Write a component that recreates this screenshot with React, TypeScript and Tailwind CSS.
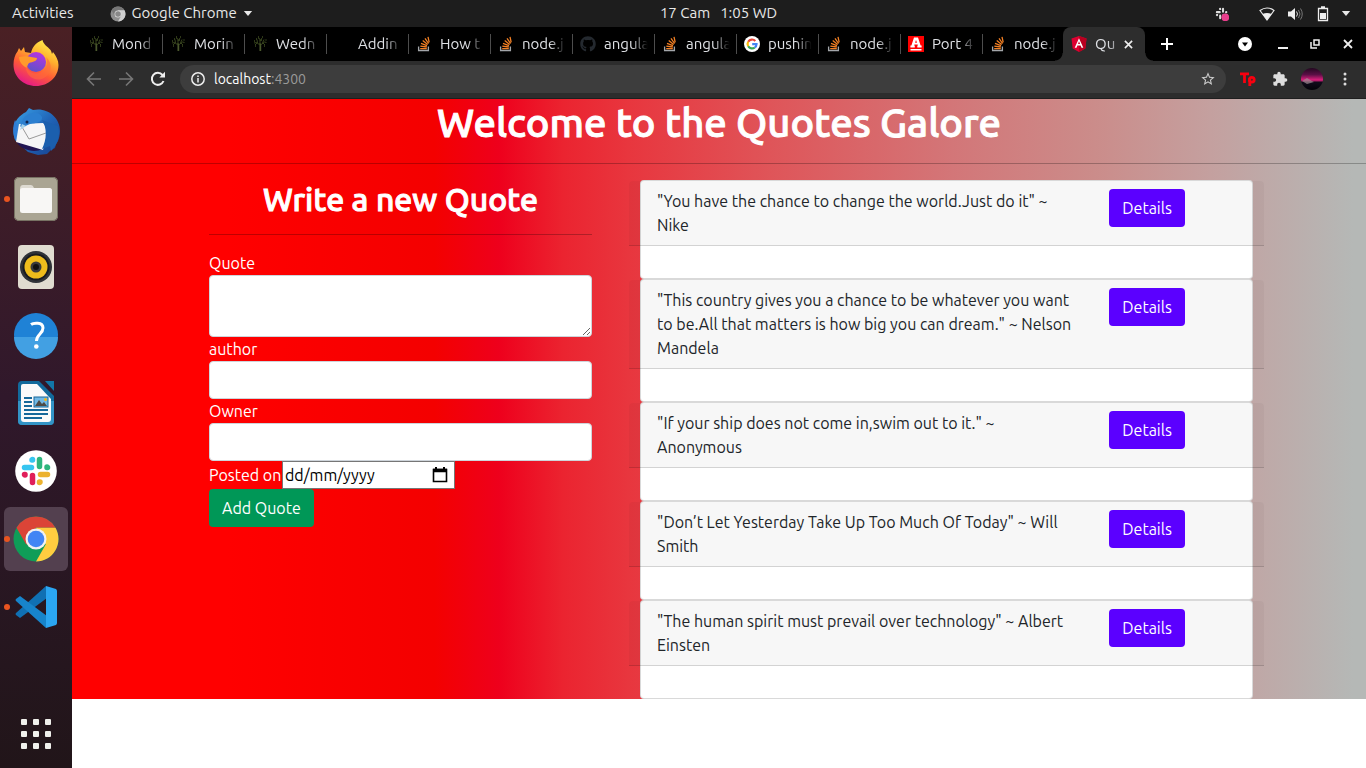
import type { ReactNode } from 'react';
import { FaGithub } from 'react-icons/fa';
import { MdExtension, MdStarBorder } from 'react-icons/md';

type IconName = 'tree' | 'none' | 'stack' | 'github' | 'google' | 'redA';

const tabs: { icon: IconName; title: string }[] = [
  { icon: 'tree', title: 'Mond' },
  { icon: 'tree', title: 'Morin' },
  { icon: 'tree', title: 'Wedn' },
  { icon: 'none', title: 'Addin' },
  { icon: 'stack', title: 'How t' },
  { icon: 'stack', title: 'node.j' },
  { icon: 'github', title: 'angula' },
  { icon: 'stack', title: 'angula' },
  { icon: 'google', title: 'pushin' },
  { icon: 'stack', title: 'node.j' },
  { icon: 'redA', title: 'Port 4' },
  { icon: 'stack', title: 'node.j' },
];

const quotes = [
  '"You have the chance to change the world.Just do it" ~ Nike',
  '"This country gives you a chance to be whatever you want to be.All that matters is how big you can dream." ~ Nelson Mandela',
  '"If your ship does not come in,swim out to it." ~ Anonymous',
  '"Don’t Let Yesterday Take Up Too Much Of Today" ~ Will Smith',
  '"The human spirit must prevail over technology" ~ Albert Einsten',
];

function TabIcon({ name }: { name: IconName }) {
  if (name === 'stack')
    return (
      <svg viewBox="0 0 16 16" className="size-4 shrink-0" fill="none" strokeWidth="1.3">
        <path d="M2.6 10.5v4h9.8v-4" stroke="#a3a6aa" />
        <path d="M4.2 12.6h6.6M4.3 10.1l6.5.9M5 7.3l6 2.3M6.7 4.600l5 4M9 2.3l3.6 5.2M12 .8l1.2 5.6" stroke="#f48024" />
      </svg>
    );
  if (name === 'github') return <FaGithub className="size-4 shrink-0 text-[#24292f]" />;
  if (name === 'tree')
    return (
      <svg viewBox="0 0 16 16" className="size-4 shrink-0" fill="none" stroke="#3c4a20" strokeWidth="0.9">
        <path d="M8 15V7M8.7 15V8" stroke="#5a6a35" />
        <path d="M8 9L4.5 6.500 2 7M5 7l-2 2M5.500 7L5 3.500M8 8V3l-2-1M8 5l2-3M8.500 9l4-3 2 .5M11 7l2 2M10.500 7L12 3.500" />
        <path d="M2 5h1M6 1h1M10 1h1M13.500 4h1M3 10h1M12 10h1M4 3h1M9 4h1" strokeWidth="1.4" />
      </svg>
    );
  if (name === 'google')
    return (
      <svg viewBox="0 0 16 16" className="size-4 shrink-0" fill="none" strokeWidth="2.2">
        <circle cx="8" cy="8" r="8" fill="#fff" />
        <path d="M11.300 4.900A4.500 4.500 0 0 0 4.200 5.700" stroke="#ea4335" />
        <path d="M4.200 5.700a4.500 4.500 0 0 0 0 4.600" stroke="#fbbc05" />
        <path d="M4.200 10.300a4.500 4.500 0 0 0 6.600 1.200" stroke="#34a853" />
        <path d="M10.800 11.500A4.500 4.500 0 0 0 12.500 8.200H8.200" stroke="#4285f4" />
      </svg>
    );
  if (name === 'redA')
    return (
      <svg viewBox="0 0 16 16" className="size-4 shrink-0">
        <path d="M0 0h16v16H0z" fill="#f00" />
        <path d="M6 1.500h4l2.600 8h1v2H9.300v-2H10l-.3-1H6.400l-.3 1h.7v2H2.400v-2h1zM8 4l-.9 2.800H9z" fill="#fff" fillRule="evenodd" />
        <path d="M2.500 13h11v1.500h-11z" fill="#fff" />
      </svg>
    );
  return <span className="size-4 shrink-0" />;
}

function ChromeMark({ className, mono = false }: { className: string; mono?: boolean }) {
  return (
    <svg viewBox="0 0 48 48" className={className}>
      <circle cx="24" cy="24" r="22.500" fill={mono ? '#8e8e8e' : '#0f9d58'} />
      <path d="M4.500 12.800A22.500 22.500 0 0 1 43.500 12.800H24L14.300 29.700z" fill={mono ? '#777' : '#db4437'} />
      <path d="M43.500 12.800A22.500 22.500 0 0 1 24 46.500L33.700 29.600 24 12.800z" fill={mono ? '#d0d0d0' : '#ffcd40'} />
      <circle cx="24" cy="24" r="10.500" fill={mono ? '#ddd' : '#f1f1f1'} />
      <circle cx="24" cy="24" r="8.300" fill={mono ? '#888' : '#4285f4'} />
    </svg>
  );
}

function Firefox() {
  return (
    <svg viewBox="0 0 48 48" className="size-12">
      <defs>
        <linearGradient id="ffBody" x1="0.8" y1="0" x2="0.300" y2="1">
          <stop offset="0" stopColor="#fff44f" />
          <stop offset="0.350" stopColor="#ffb02e" />
          <stop offset="0.650" stopColor="#ff5b36" />
          <stop offset="1" stopColor="#e3168c" />
        </linearGradient>
        <linearGradient id="ffGlobe" x1="0.7" y1="0" x2="0.3" y2="1">
          <stop offset="0" stopColor="#b833e1" />
          <stop offset="1" stopColor="#5b53c8" />
        </linearGradient>
      </defs>
      <path d="M30.500 1c1 5 5 6 8 10 1 1 1 3 1.500 4l1-2c3 4 5.500 8 5.500 13 0 12-10 21-22.500 21S1.500 38 1.500 25.500c0-5 1.500-10 4-13L7 9l2 3 3-4 1 5 6 1c1-5 4-10 11.500-13z" fill="url(#ffBody)" />
      <circle cx="24" cy="23" r="10" fill="url(#ffGlobe)" />
      <path d="M7 18c5-1 9-1 12 0l6 1c0 3-4 4-8 5-1 1-2 3-2 5-4-2-8-6-8-11z" fill="#ff9a2b" />
      <path d="M14 25c1 10 12 12 18 6 3-3 4-8 2-13 7 6 6 17-2 21-9 5-20-3-18-14z" fill="#ff6a3a" opacity="0.6" />
    </svg>
  );
}

function Thunderbird() {
  return (
    <svg viewBox="0 0 48 48" className="size-12">
      <defs>
        <linearGradient id="tbBody" x1="0" y1="0" x2="1" y2="1">
          <stop offset="0" stopColor="#3aa2e8" />
          <stop offset="0.500" stopColor="#2065b8" />
          <stop offset="1" stopColor="#173f8c" />
        </linearGradient>
      </defs>
      <path d="M3 33C-2 18 6 9 14 5l3-4 4 2c14-3 27 7 27 21 0 4-1 7-2 10l-2 3-1 4-4 2-4 4-9 1-10-3z" fill="url(#tbBody)" />
      <path d="M3 13c-3 8-2 16 1 21l3-13z" fill="#2f7ed6" />
      <path d="M4 34h12l14 8c-6 4-21 2-26-8z" fill="#211553" />
      <path d="M7 17l24-1c5 4 4 11 3 16l-3 11L4 35z" fill="#f5f5f6" />
      <path d="M10 20l7 12 17-6" fill="none" stroke="#999" strokeWidth="1" />
      <path d="M11 12c6-8 16-8 19-2 1 5-6 6-12 7-4 1-7 5-9 3-2-1 1-4 2-8z" fill="#2b7fd0" />
      <path d="M30 13c6 9 4 21 0 29l8-3 1 5c6-6 10-14 7-25z" fill="#1b5fae" />
      <circle cx="15" cy="15" r="1.500" fill="#12254d" />
      <path d="M10 17l-2 6 6-4z" fill="#a7d3ea" />
    </svg>
  );
}

function Files() {
  return (
    <svg viewBox="0 0 48 48" className="size-12">
      <rect x="2" y="2" width="44" height="44" rx="5" fill="#aaa593" />
      <rect x="2.500" y="2.500" width="43" height="43" rx="4.500" fill="none" stroke="#777263" />
      <path d="M8 14q0-4 3-4h8q2 0 3 3h14q4 0 4 3v18H8z" fill="#dedbd2" />
      <rect x="8" y="13" width="32" height="25" rx="2.500" fill="#f8f7f5" />
    </svg>
  );
}

function Speaker() {
  return (
    <svg viewBox="0 0 48 48" className="size-12">
      <rect x="6" y="2" width="36" height="44" rx="4" fill="#e0dcd0" />
      <circle cx="24" cy="24" r="16" fill="#303338" />
      <circle cx="24" cy="24" r="13.500" fill="#191b20" />
      <circle cx="24" cy="24" r="11.500" fill="#eebc1c" />
      <circle cx="24" cy="24" r="5.500" fill="#393a3c" />
      <circle cx="24" cy="24" r="3" fill="#111" />
    </svg>
  );
}

function Help() {
  return (
    <svg viewBox="0 0 48 48" className="size-12">
      <circle cx="24" cy="24" r="22" fill="#1f82d6" />
      <path d="M2 26a22 22 0 0 0 44 0z" fill="#42a0e3" />
      <path d="M19 13.500c2-1.500 12-3 12 3.500 0 6-6.500 6-6.500 13" fill="none" stroke="#fff" strokeWidth="3" />
      <circle cx="24.300" cy="35.500" r="2.300" fill="#fff" />
    </svg>
  );
}

function Writer() {
  return (
    <svg viewBox="0 0 48 48" className="size-12">
      <path d="M10 2h17l15 15v25q0 4-4 4H10q-4 0-4-4V6q0-4 4-4z" fill="#126a9c" />
      <path d="M6 22h36v20q0 4-4 4H10q-4 0-4-4z" fill="#3394c6" />
      <path d="M11 5h14l14 15v20q0 3-3 3H12q-3 0-3-3V7q0-2 2-2z" fill="#fafafa" />
      <path d="M33 2h9v10z" fill="#1277a8" />
      <path d="M12 19h8M12 23h8M12 27h8M12 31h24M12 35h24M12 39h18" stroke="#16689a" strokeWidth="2" />
      <rect x="22" y="18" width="14" height="10" fill="#72b9e5" stroke="#16689a" />
      <path d="M23 27l4-6 3 4 2-2 3 4z" fill="#4d4a45" />
      <circle cx="33.500" cy="20.500" r="1.500" fill="#f5b517" />
    </svg>
  );
}

function SlackMark({ mono = false }: { mono?: boolean }) {
  const c = mono ? ['#ddd', '#ddd', '#ddd', '#ddd'] : ['#36c5f0', '#2eb67d', '#ecb22e', '#e01e5a'];
  return (
    <>
      <path d="M12.500 20.500h7M20.500 12.500v.5h-.5" stroke={c[0]} />
      <path d="M27.500 12.500v7M35.500 20.500h-.5v-.5" stroke={c[1]} />
      <path d="M28.500 27.500h7M27.500 35.500v-.5h.5" stroke={c[2]} />
      <path d="M20.500 28.500v7M12.500 27.500h.5v.5" stroke={c[3]} />
    </>
  );
}

function Slack() {
  return (
    <svg viewBox="0 0 48 48" className="size-12" fill="none" strokeWidth="5.500" strokeLinecap="round" strokeLinejoin="round">
      <circle cx="24" cy="24" r="20.800" fill="#fff" />
      <SlackMark />
    </svg>
  );
}

function VsCode() {
  return (
    <svg viewBox="0 0 48 48" className="size-12">
      <path d="M34 3L4 30q-1 1 0 2l4 3 27-20z" fill="#1070b3" />
      <path d="M8 13l-4 3q-1 1 0 2l30 27 1-12z" fill="#1784cb" />
      <path d="M34 3l10 3q1 1 1 2v32q0 1-1 2l-10 3V3z" fill="#2ba6f2" />
    </svg>
  );
}

function DockItem({ label, running = false, active = false, children }: { label: string; running?: boolean; active?: boolean; children: ReactNode }) {
  return (
    <button
      aria-label={label}
      className={`relative flex size-16 items-center justify-center rounded-md ${active ? 'bg-[#53404f]' : ''}`}
    >
      {running && <span className="absolute left-0 size-[6px] rounded-full bg-[#e95420]" />}
      {children}
    </button>
  );
}

function TopBar() {
  return (
    <header className="grid h-[27px] grid-cols-[1fr_auto_1fr] items-center bg-[#1d1d1d] pr-[15px] pl-3 text-[15px] text-[#e8e8e8]">
      <div className="flex items-center gap-9">
        <button>Activities</button>
        <button className="flex items-center gap-[6px]">
          <ChromeMark className="size-4" mono />
          Google Chrome
          <svg viewBox="0 0 10 6" className="h-[5px] w-[10px]" fill="currentColor"><path d="M0 0h10L5 6z" /></svg>
        </button>
      </div>
      <button className="flex gap-[10px] pl-[74px]"><span>17 Cam</span><span>1:05 WD</span></button>
      <div className="flex items-center justify-end">
        <svg viewBox="8 8 34 34" className="mr-[30px] size-[14px]" fill="none" strokeWidth="5" strokeLinecap="round">
          <SlackMark mono />
          <circle cx="33" cy="33" r="9.500" fill="#e83e8c" />
        </svg>
        <svg viewBox="0 0 16 16" className="mr-3 size-4"><path d="M1 4.500q7-5 14 0L8 14z" fill="none" stroke="#e8e8e8" strokeWidth="1.200" /><path d="M3.500 8q4.500-2 9 0L8 14z" fill="#eee" /></svg>
        <svg viewBox="0 0 16 16" className="mr-[14px] size-4" fill="none"><path d="M1 5.500h3L8 2v12L4 10.500H1z" fill="#eee" /><path d="M9.500 5.500q2 2.500 0 5" stroke="#ddd" /><path d="M11.500 4q3 4 0 8M13.500 2.500q3.500 5.500 0 11" stroke="#777" /></svg>
        <svg viewBox="0 0 12 16" className="mr-3 h-4 w-3"><path d="M4 1h4M1.500 2.500h9v12h-9z" fill="none" stroke="#eee" strokeWidth="1.300" /><path d="M3 7h6v6H3z" fill="#eee" /></svg>
        <svg viewBox="0 0 10 6" className="h-[5px] w-[10px]" fill="currentColor"><path d="M0 0h10L5 6z" /></svg>
      </div>
    </header>
  );
}

function Browser() {
  return (
    <>
      <div className="flex h-[34px] items-center bg-black pl-2 text-[15px] text-[#dfe1e5]">
        {tabs.map((tab, i) => (
          <button key={i} className="flex h-full w-[82px] shrink-0 items-center">
            <span className={`flex h-5 w-full items-center gap-2 border-l pl-[7px] ${i > 0 ? 'border-[#4d4d4d]' : 'border-transparent'}`}>
              <TabIcon name={tab.icon} />
              <span className="w-[46px] text-left whitespace-nowrap [mask-image:linear-gradient(to_right,black_60%,transparent_95%)]">{tab.title}</span>
            </span>
          </button>
        ))}
        <div className="relative -ml-px flex h-full w-[82px] shrink-0 items-center gap-2 rounded-t-lg bg-[#2d2d2d] pl-2 text-[#dfe1e5]">
          <span className="absolute bottom-0 -left-2 size-2 bg-[radial-gradient(circle_at_0_0,#000_7px,#2d2d2d_8px)]" />
          <span className="absolute -right-2 bottom-0 size-2 bg-[radial-gradient(circle_at_100%_0,#000_7px,#2d2d2d_8px)]" />
          <svg viewBox="0 0 16 16" className="size-4 shrink-0"><path d="M8 0l7.500 2.600-1.200 9.800L8 16l-6.300-3.600L.5 2.600z" fill="#dd0031" /><path d="M8 0l7.500 2.600-1.200 9.800L8 16z" fill="#b90020" /><path d="M8 2.300l4.300 9.400h-1.800l-.9-2.200H6.400l-.9 2.200H3.700zM8 5.300L7 8h2z" fill="#fff" fillRule="evenodd" /></svg>
          <span className="w-[21px] whitespace-nowrap [mask-image:linear-gradient(to_right,black_60%,#0008)]">Qu</span>
          <button aria-label="Close tab"><svg viewBox="0 0 10 10" className="size-[9px]" stroke="#eee" strokeWidth="1.800"><path d="M1 1l8 8M9 1L1 9" /></svg></button>
        </div>
        <button aria-label="New tab" className="ml-4"><svg viewBox="0 0 12 12" className="size-3" stroke="#fff" strokeWidth="2"><path d="M6 0v12M0 6h12" /></svg></button>
        <div className="ml-auto flex items-center pr-[13px] text-white">
          <button aria-label="Search tabs" className="mr-[26px]"><svg viewBox="0 0 14 14" className="size-[14px]"><circle cx="7" cy="7" r="7" fill="#fff" /><path d="M4 5.500h6L7 9.500z" fill="#000" /></svg></button>
          <button aria-label="Minimize" className="mr-[22px]"><svg viewBox="0 0 10 10" className="size-[10px]" stroke="#eee" strokeWidth="2"><path d="M0 9h10" /></svg></button>
          <button aria-label="Restore" className="mr-[23px]"><svg viewBox="0 0 10 10" className="size-[10px]" fill="none" stroke="#eee" strokeWidth="1.500"><path d="M4 1h5v5H4zM1 3v6h6" /></svg></button>
          <button aria-label="Close"><svg viewBox="0 0 10 10" className="size-[10px]" stroke="#eee" strokeWidth="1.800"><path d="M1 1l8 8M9 1L1 9" /></svg></button>
        </div>
      </div>
      <div className="flex h-[38px] items-center border-b border-[#1f1f1f] bg-[#2d2d2d] pr-[19px] pb-px pl-[14px]">
        <svg viewBox="0 0 16 16" className="mr-4 size-4" fill="none" stroke="#777" strokeWidth="1.600"><path d="M15 8H2M8 1.500L1.500 8 8 14.500" /></svg>
        <svg viewBox="0 0 16 16" className="mr-4 size-4" fill="none" stroke="#777" strokeWidth="1.600"><path d="M1 8h13M8 1.500L14.500 8 8 14.500" /></svg>
        <button aria-label="Reload" className="mr-[14px]"><svg viewBox="0 0 16 16" className="size-4" fill="none" stroke="#eee" strokeWidth="2"><path d="M13.500 10A6 6 0 1 1 12.500 4" /><path d="M15 .8V6.500H9.300z" fill="#eee" stroke="none" /></svg></button>
        <div className="flex h-7 flex-1 items-center rounded-full bg-[#3d3d3d] px-[10px] text-sm">
          <svg viewBox="0 0 14 14" className="mr-[9px] ml-px size-[14px]" fill="none" stroke="#eee" strokeWidth="1.500"><circle cx="7" cy="7" r="6.200" /><path d="M7 6v4.500M7 3.400v1.500" /></svg>
          <span className="text-white">localhost<span className="text-[#9a9a9a]">:4300</span></span>
          <MdStarBorder className="ml-auto size-4 text-[#ccc]" />
        </div>
        <svg viewBox="0 0 16 14" className="ml-[14px] h-[14px] w-4" fill="none" stroke="#f8000f" strokeWidth="2.800"><path d="M0 1.800h9M4.500 1v10M9.800 14V6" /><circle cx="11.800" cy="7.800" r="2.400" /></svg>
        <MdExtension className="ml-4 size-4 text-[#ddd]" />
        <svg viewBox="0 0 22 22" className="ml-[13px] size-[22px]"><defs><linearGradient id="sky" x1="0" y1="0" x2="0" y2="1"><stop offset="0" stopColor="#230820" /><stop offset="0.300" stopColor="#5a0f45" /><stop offset="0.550" stopColor="#e0207f" /><stop offset="0.650" stopColor="#100c1b" /><stop offset="1" stopColor="#020208" /></linearGradient></defs><circle cx="11" cy="11" r="11" fill="url(#sky)" /><path d="M1 13l5-3 5 3 2 1-7 2z" fill="#a28c96" opacity="0.700" /></svg>
        <svg viewBox="0 0 4 14" className="ml-5 h-[14px] w-1" fill="#ddd"><circle cx="2" cy="2" r="1.500" /><circle cx="2" cy="7" r="1.500" /><circle cx="2" cy="12" r="1.500" /></svg>
      </div>
    </>
  );
}

const field = 'block w-full rounded border border-[#ced4da] bg-white px-3 text-base text-[#495057]';

function QuoteForm() {
  return (
    <form className="text-base leading-6 text-white">
      <h2 className="text-center text-[32px] leading-[38px] font-medium [-webkit-text-stroke:1px_white]">Write a new Quote</h2>
      <hr className="my-4 border-black/25" />
      <label htmlFor="quote" className="block">Quote</label>
      <textarea id="quote" className={`${field} h-[62px] resize`} />
      <label htmlFor="author" className="block">author</label>
      <input id="author" className={`${field} h-[38px]`} />
      <label htmlFor="owner" className="block">Owner</label>
      <input id="owner" className={`${field} h-[38px]`} />
      <div className="flex h-7 items-center">
        <label htmlFor="posted" className="w-[73px] whitespace-nowrap">Posted on</label>
        <span className="flex h-full w-[173px] items-center border border-[#767676] bg-white pr-[6px] pl-[2px] text-black">
          <input id="posted" placeholder="dd/mm/yyyy" className="min-w-0 flex-1 placeholder:text-black" />
          <button type="button" aria-label="Pick a date">
            <svg viewBox="0 0 16 18" className="h-[18px] w-4" fill="none" stroke="#000"><path d="M1.500 3.500h13v12h-13z" strokeWidth="1.600" /><path d="M1 4.500h14" strokeWidth="3.500" /><path d="M4 1v3M12 1v3" strokeWidth="2" /></svg>
          </button>
        </span>
      </div>
      <button type="button" className="h-[38px] rounded bg-[#009757] px-[13px]">Add Quote</button>
    </form>
  );
}

function QuoteCard({ text }: { text: string }) {
  return (
    <li className="rounded border border-black/15 bg-white pb-8">
      <div className="-mx-3 grid grid-cols-[3fr_1fr] rounded-t border-b border-black/15 bg-black/[0.03] px-4 py-2">
        <p className="pr-4 pl-3">{text}</p>
        <div className="h-[38px] px-3">
          <button className="h-[38px] rounded bg-[#5b00ff] px-[13px] text-white">Details</button>
        </div>
      </div>
    </li>
  );
}

export default function App() {
  return (
    <div className="flex min-h-screen flex-col bg-white font-['Ubuntu','Noto_Sans',sans-serif]">
      <TopBar />
      <div className="flex flex-1">
        <nav aria-label="Dock" className="flex w-[72px] shrink-0 flex-col items-center gap-1 bg-linear-to-b from-[#4a2024] via-[#30182b] via-50% to-[#211519] pt-1 pb-[2px]">
          <DockItem label="Firefox"><Firefox /></DockItem>
          <DockItem label="Thunderbird"><Thunderbird /></DockItem>
          <DockItem label="Files" running><Files /></DockItem>
          <DockItem label="Rhythmbox"><Speaker /></DockItem>
          <DockItem label="Help"><Help /></DockItem>
          <DockItem label="Writer"><Writer /></DockItem>
          <DockItem label="Slack"><Slack /></DockItem>
          <DockItem label="Chrome" running active><ChromeMark className="size-12" /></DockItem>
          <DockItem label="Code" running><VsCode /></DockItem>
          <button aria-label="Show applications" className="mt-auto grid size-16 grid-cols-[repeat(3,6px)] content-center justify-center gap-[6px]">
            {Array.from({ length: 9 }, (_, i) => <span key={i} className="size-[6px] rounded-[1px] bg-[#f0f0ec]" />)}
          </button>
        </nav>
        <div className="min-w-0 flex-1">
          <Browser />
          <main className="bg-[linear-gradient(90deg,#ff0000_12%,#f80000_22%,#f40000_28%,#ee001c_33%,#eb2430_38%,#e8363e_43%,#df5559_54%,#d37678_68%,#cb8c8a_79%,#c4a09f_88%,#b5b8b6_99%)]">
            <h1 className="text-center text-[40px] leading-[48px] font-medium text-white [-webkit-text-stroke:1px_white]">Welcome to the Quotes Galore</h1>
            <hr className="my-4 border-black/25" />
            <div className="mx-auto grid max-w-[1140px] grid-cols-[383fr_613fr] gap-12 pr-9 pl-[60px]">
              <QuoteForm />
              <ul className="text-base leading-6 text-[#212529]">
                {quotes.map((q) => <QuoteCard key={q} text={q} />)}
              </ul>
            </div>
          </main>
        </div>
      </div>
    </div>
  );
}
